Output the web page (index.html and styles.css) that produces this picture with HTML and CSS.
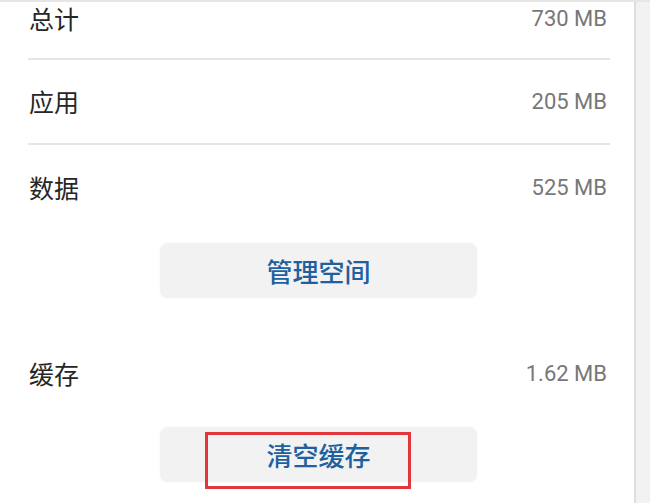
FILE: index.html
```html
<!DOCTYPE html>
<html lang="zh-CN">
<head>
<meta charset="utf-8">
<title>存储</title>
<link rel="stylesheet" href="styles.css">
</head>
<body>
<div class="screen">
  <main class="panel">
    <div class="list">
      <div class="row divided top"><span class="label">总计</span><span class="value">730 MB</span></div>
      <div class="row divided"><span class="label">应用</span><span class="value">205 MB</span></div>
      <div class="row"><span class="label">数据</span><span class="value">525 MB</span></div>
      <div class="btn-wrap first"><button class="btn">管理空间</button></div>
      <div class="row cache"><span class="label">缓存</span><span class="value">1.62 MB</span></div>
      <div class="btn-wrap second"><button class="btn">清空缓存<span class="highlight"></span></button></div>
    </div>
  </main>
  <div class="scroll-strip"></div>
</div>
</body>
</html>
```

FILE: styles.css
```css
html, body {
  margin: 0;
  padding: 0;
  background: #ffffff;
}
body {
  width: 650px;
  height: 503px;
  overflow: hidden;
  font-family: "Noto Sans CJK SC", "Noto Sans", sans-serif;
}
.screen {
  display: flex;
  height: 503px;
  border-top: 2px solid #e6e6e6;
  box-sizing: border-box;
  overflow: hidden;
}
.panel {
  width: 634px;
  flex: none;
  background: #fff;
  overflow: hidden;
}
.scroll-strip {
  flex: 1;
  background: #f2f2f2;
  border-left: 2px solid #dedede;
}
.list {
  display: flex;
  flex-direction: column;
}
.row {
  display: flex;
  align-items: center;
  justify-content: space-between;
  height: 85px;
  margin: 0 24px 0 28px;
  box-sizing: border-box;
}
.row.top {
  height: 58px;
  align-items: flex-start;
  padding-top: 4px;
}
.row.divided {
  border-bottom: 2px solid #e6e6e6;
}
.label {
  font-size: 25px;
  color: #262626;
  line-height: 1;
  padding-left: 1px;
}
.value {
  font-family: Roboto, "Liberation Sans", sans-serif;
  font-size: 22px;
  color: #777777;
  line-height: 1;
  padding-right: 3px;
}
.row.top .value {
  padding-top: 2px;
}
.btn-wrap {
  display: flex;
  padding-left: 160px;
}
.btn-wrap.first {
  margin-top: 13px;
}
.btn-wrap.second {
  margin-top: 11px;
}
.row.cache {
  margin-top: 33px;
}
.btn {
  position: relative;
  width: 317px;
  height: 55px;
  border: none;
  border-radius: 8px;
  background: #f2f2f2;
  box-shadow: 0 0 3px rgba(0,0,0,0.04);
  color: #20609f;
  font-family: "Noto Sans CJK SC", sans-serif;
  font-size: 26px;
  font-weight: 500;
  padding: 0;
  line-height: 1;
}
.highlight {
  position: absolute;
  left: 45px;
  top: 5px;
  width: 206px;
  height: 57px;
  border: 3px solid #e3363c;
  box-sizing: border-box;
}
```
